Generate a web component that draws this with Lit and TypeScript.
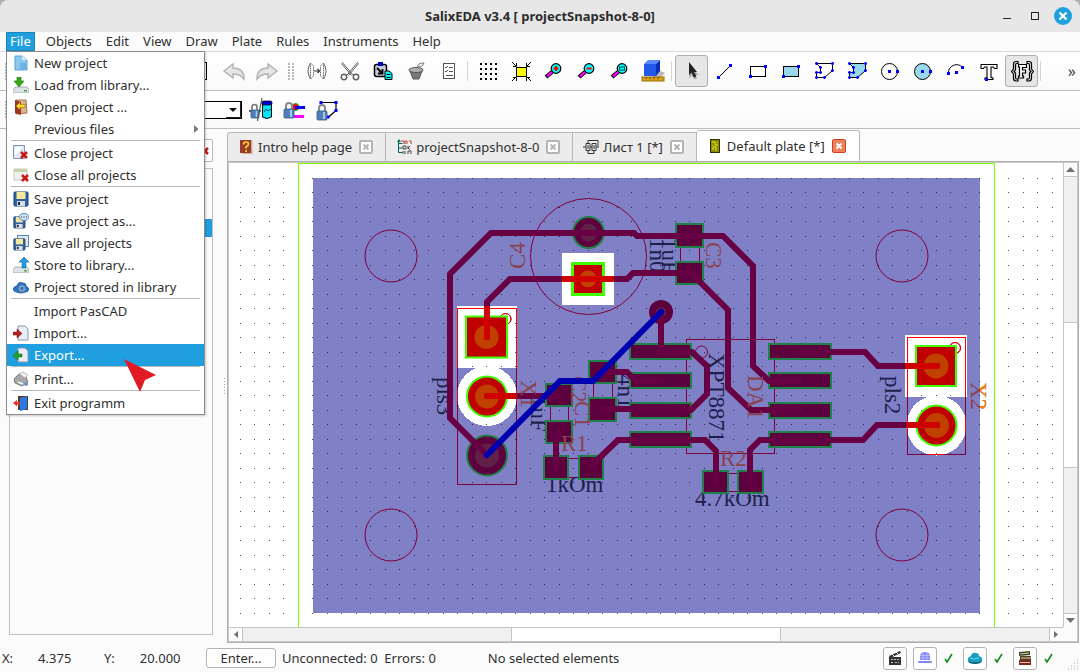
import { LitElement, html, svg, css, nothing } from "lit";
import { customElement } from "lit/decorators.js";
import { classMap } from "lit/directives/class-map.js";

const blueDot = (x: number, y: number) =>
  svg`<rect x=${x - 1.5} y=${y - 1.5} width="3" height="3" fill="#0000ff"/>`;

const redX = (x: number, y: number) =>
  svg`<path d="M${x} ${y}l6 6M${x + 6} ${y}l-6 6" stroke="#c81818" stroke-width="2.6"/>`;

const padlock = (x: number, y: number) => svg`
  <path d="M${x + 2} ${y + 8}V${y + 4}a3 3 0 0 1 6 0v4" fill="none" stroke="#8a8a8a" stroke-width="2"/>
  <rect x=${x} y=${y + 7} width="10" height="9" rx="1" fill="#4f7fb8" stroke="#335a8c" stroke-width=".8"/>
  <path d="M${x + 7} ${y + 8}v7" stroke="#a8c8ec" stroke-width="2"/>`;

const magnifier = (mark: unknown) => svg`
  <path d="M4 18l6-5" stroke="#000" stroke-width="4.2"/><path d="M5 17.400l5-4.200" stroke="#ff00ff" stroke-width="2.400"/>
  <circle cx="14" cy="9.500" r="4.800" fill="#00ffff" stroke="#000" stroke-width="1.200"/>${mark}`;

const polyline = (fill: string) => svg`
  <path d="M4.500 4.500h16v7l-8 7h-8v-5h4v-5z" fill=${fill} stroke="#000"/>
  ${[[4.5, 4.5], [20.5, 4.5], [20.5, 11.5], [12.5, 18.5], [4.5, 18.5], [4.5, 13.5], [8.5, 13.5], [8.5, 8.5]].map(([x, y]) =>
    svg`<path d="M${x - 1.5} ${y}h3M${x} ${y - 1.5}v3" stroke="#0000ff" stroke-width="1.500"/>`)}`;

const icons: Record<string, unknown> = {
  undo: svg`<path d="M2 12l9-7v4c7 0 11 3 11 11-3-4-6-5-11-5v4z" fill="#e6e6e6" stroke="#b4b4b4" stroke-width="1.500"/>`,
  redo: svg`<path d="M22 12l-9-7v4C6 9 2 12 2 20c3-4 6-5 11-5v4z" fill="#e6e6e6" stroke="#b4b4b4" stroke-width="1.500"/>`,
  mirror: svg`<g fill="none" stroke="#666"><path d="M5.500 4Q3 8 3 12t2.500 8M18.500 4Q21 8 21 12t-2.500 8"/><path d="M5.500 4v16l3-3V7zM18.500 4v16l-3-3V7z" stroke-dasharray="1.500 .8"/></g><path d="M9 12h5M12.500 10L14.500 12l-2 2" fill="none" stroke="#333" stroke-width="1.200"/>`,
  cut: svg`<g fill="none" stroke="#606060"><path d="M4 3l11 13M20 3L9 16M3.500 4.500l10 12M20.500 4.500l-10 12" stroke-width="1"/><circle cx="6" cy="18" r="2.700" stroke-width="1.500"/><circle cx="18" cy="18" r="2.700" stroke-width="1.500"/></g>`,
  paste: svg`<rect x="3.500" y="5.500" width="12" height="12" rx="2" fill="#c8c8d8" stroke="#000" stroke-width="1.500"/><path d="M7 3h5v4H7z" fill="#0000b0"/><path d="M6 9l5 5M11.500 10v4.500H7" fill="none" stroke="#000" stroke-width="1.800"/><path d="M14 12h4l3 2.500v6h-7z" fill="#00ffff" stroke="#000"/><path d="M15.500 15.500h4M15.500 18.500h4" stroke="#000"/>`,
  trash: svg`<path d="M6 12h12l-3 8H9z" fill="#7a7a7a" stroke="#555"/><ellipse cx="12" cy="11" rx="7" ry="2.500" fill="#b0b0b0" stroke="#555"/><path d="M14 8c-1-3 2-4 6-4-1 3-3 4-6 4z" fill="#eee" stroke="#777"/>`,
  form: svg`<rect x="6.500" y="4.500" width="11" height="15" fill="#fff" stroke="#555"/><path d="M8 8l1 1 2-2M8 12l1 1 2-2M12 8.500h4M12 12.500h4M9 16.500h7" fill="none" stroke="#555"/>`,
  grid: svg`<g fill="#000">${[4, 9, 14, 19].flatMap((x) => [4, 9, 14, 19].map((y) => svg`<rect x=${x} y=${y} width="2" height="2"/>`))}</g>`,
  fit: svg`<rect x="7.500" y="8.500" width="10" height="9" fill="#ffff00" stroke="#000"/><path d="M3 3l4 4M22 3l-4 4M3 22l4-4M22 22l-4-4M4 7.500h3.500V4M21 7.500h-3.500V4M4 18.500h3.500V22M21 18.500h-3.500V22" fill="none" stroke="#000"/>`,
  zoomIn: magnifier(svg`<path d="M11.500 9.500h5M14 7v5" stroke="#ff0000" stroke-width="2"/>`),
  zoomOut: magnifier(svg`<path d="M11.500 9.500h5" stroke="#ff0000" stroke-width="2"/>`),
  zoomFit: magnifier(svg`<rect x="11.500" y="8" width="5" height="3" fill="none" stroke="#004040"/>`),
  cube: svg`<path d="M15 10l9 4-4 4h-8z" fill="#b8b8b8"/><path d="M3 5l12 0v12H3z" fill="#2458e8"/><path d="M3 5l4-4h12l-4 4z" fill="#5a88ff"/><path d="M15 5l4-4v11l-4 5z" fill="#0a30b8"/><rect x="1" y="18" width="22" height="4" fill="#d8a018" stroke="#9a6c08"/><path d="M5 18v2M9 18v2M13 18v2M17 18v2" stroke="#7a5000"/>`,
  cursor: svg`<path d="M10 8l9 8-4 0 2 4-3 0-2-3-3 2z" fill="#aaa"/><path d="M9 3v13l2.500-2.500 2.500 5 2.500-1-2.500-4.500h3z" fill="#222"/>`,
  line: svg`<path d="M6 18L18 6" stroke="#000"/>${blueDot(5.5, 18.5)}${blueDot(17.5, 6.5)}`,
  rect: svg`<rect x="4.500" y="7.500" width="15" height="10" fill="#fff" stroke="#000"/>${blueDot(4.5, 17.5)}${blueDot(19.5, 7.5)}`,
  rectFill: svg`<rect x="4.500" y="7.500" width="15" height="10" fill="#98d8ec" stroke="#000"/>${blueDot(4.5, 17.5)}${blueDot(19.5, 7.5)}`,
  poly: polyline("#fff"),
  polyFill: polyline("#98d8ec"),
  circle: svg`<circle cx="11.500" cy="12.500" r="8" fill="#fff" stroke="#000"/>${blueDot(11.5, 12.5)}${blueDot(19.5, 12.5)}`,
  circleFill: svg`<circle cx="11.500" cy="12.500" r="8" fill="#98d8ec" stroke="#000"/>${blueDot(11.5, 12.5)}${blueDot(19.5, 12.5)}`,
  arc: svg`<path d="M4.500 14a8 8 0 0 1 14-5.500" fill="none" stroke="#000"/>${blueDot(4.5, 14.5)}${blueDot(12.5, 13.5)}${blueDot(18.5, 8.5)}`,
  text: svg`<path d="M4 5.500h16v4h-2.500l-1-1.500H14v10.500l2 .5v1.500H8V19l2-.5V8H7.500l-1 1.500H4z" fill="#fff" stroke="#000" stroke-width="1.100"/>${blueDot(9.5, 20.5)}`,
  formula: svg`<g fill="none" stroke="#000" stroke-width="1.200"><path d="M8 2.500H6Q3.500 2.500 3.500 5v5L1.500 12.500 3.500 15v4q0 3 2.500 3h2v-2H6.500Q5.500 20 5.500 18v-4L4 12.500 5.500 11V6q0-1.500 1-1.500H8zM17 2.500h2q2.500 0 2.500 2.500v5l2 2.500-2 2.500v4q0 3-2.500 3h-2v-2h1.500q1 0 1-2v-4l1.500-1.500L19.500 11V6q0-1.500-1-1.500H17z"/><path d="M8.500 5.500h8v3h-4v2.500h3v3h-3v3h1v2h-5v-2h1v-9h-1z" fill="#fff"/></g>`,
  lockLib: svg`<path d="M0 13h12" stroke="#222" stroke-width="1.500"/><path d="M3 12V9a2.500 2.500 0 0 1 5 0v3" fill="none" stroke="#777" stroke-width="1.600"/><rect x="2" y="12" width="8" height="8" rx="1" fill="#4f7fb8" stroke="#335a8c" stroke-width=".8"/><path d="M7.500 13v6" stroke="#a8c8ec" stroke-width="1.600"/><path d="M13 0L8.500 23" stroke="#506040" stroke-width="1.200"/><path d="M13.500 5v14q4 3 9 0V5" fill="#00e8f8" stroke="#000"/><rect x="13" y="3" width="10" height="4" rx="1.500" fill="#0000d0" stroke="#000" stroke-width=".7"/><path d="M15 14l2-3 2 2 3-2" stroke="#005060" fill="none"/>`,
  lockLayer: svg`<circle cx="13.500" cy="9" r="3.500" fill="#ff0000" stroke="#00c000"/><path d="M13 9.500h10" stroke="#0000ff" stroke-width="3"/><path d="M12 18.500h10" stroke="#ff00ff" stroke-width="3"/>${padlock(2, 4)}`,
  lockShape: svg`<path d="M6 4.500h15v8l-8 7" fill="none" stroke="#000" stroke-width="1.200"/>${blueDot(6, 4.5)}${blueDot(21, 4.5)}${blueDot(21, 12.5)}${blueDot(13, 19)}${padlock(2, 6)}`,
};

const page = svg`<path d="M3 1h7l3 3v11H3z" fill="#e8eef6" stroke="#8898b0"/>`;
const floppy = (x: number, y: number, s: number) => svg`<g transform="translate(${x} ${y}) scale(${s})">
  <rect x="1" y="1" width="14" height="14" rx="1" fill="#2f62a0" stroke="#1b3d70"/><rect x="3.500" y="1" width="9" height="7" fill="#f4e7a0"/>
  <rect x="4" y="10" width="8" height="5" fill="#d8dde4"/><rect x="5" y="11" width="2" height="3" fill="#223"/></g>`;
const tray = svg`<path d="M2 10h12l2 3v3H0v-3z" fill="#dfe3e8" stroke="#9aa2ac" stroke-width=".8"/><rect x="11" y="13" width="3" height="1.500" fill="#40b020"/>`;

const menuIcons: Record<string, unknown> = {
  new: svg`<path d="M2 1h7l5 4v10H2z" fill="#8cc8ee" stroke="#5aa0d0"/><path d="M9 1v4h5z" fill="#d8eefc"/><path d="M7 8h6v6H7z" fill="#6ab4e4"/>`,
  load: svg`${tray}<path d="M4 0h4v4h3l-5 6-5-6h3z" fill="#38a818" stroke="#207008" stroke-width=".6"/>`,
  open: svg`<path d="M3 1l10 0 1 13-11 1z" fill="#d8b48c" stroke="#a07850"/><path d="M2 1l6 2v13l-6-2z" fill="#a03428"/><path d="M12 5.500H7V3L3 7l4 4V8.500h5z" fill="#ffe020" stroke="#806000" stroke-width=".5"/>`,
  close: svg`<path d="M.5 .5h11v13H.5z" fill="#dfe8f4" stroke="#8098b8"/><path d="M2 2h7l-7 9z" fill="#fff"/>${redX(8, 7)}`,
  closeAll: svg`<rect x="1" y="2" width="13" height="11" fill="#f0f0ec" stroke="#c8c8c0"/><rect x="1" y="2" width="13" height="3" fill="#c4d4a8"/>${redX(9, 8)}`,
  save: floppy(0, 0, 1),
  saveAs: svg`${floppy(0, 3, 0.8)}<ellipse cx="11" cy="4" rx="5" ry="3.500" fill="#cfe2f4" stroke="#5888b8"/><path d="M8 4h1M10.500 4h1M13 4h1" stroke="#224"/>`,
  saveAll: svg`<rect x="4.500" y=".5" width="11" height="11" fill="#dfe8f2" stroke="#5888b8"/>${floppy(0, 3, 0.8)}`,
  store: svg`${tray}<path d="M9 11h4V5h3l-5-5-5 5h3z" fill="#2898e0" stroke="#1068a8" stroke-width=".6"/>`,
  stored: svg`<path d="M1 12q-2-4 3-5 1-5 6-3 3 0 3 3 4 2 2 5-7 4-14 0z" fill="#2f74c4" stroke="#1c4c8c" stroke-width=".8"/><circle cx="9" cy="9.500" r="2.500" fill="none" stroke="#8aa4c4" stroke-width="1.500"/>`,
  import: svg`<g transform="translate(2 0)">${page}</g><path d="M0 7h4V4l5 4.500L4 13v-3H0z" fill="#b82020" stroke="#701010" stroke-width=".5"/>`,
  export: svg`<g transform="translate(2 0)">${page}</g><path d="M9 7H5V4L0 8.500 5 13v-3h4z" fill="#28a028" stroke="#0c600c" stroke-width=".5"/>`,
  print: svg`<path d="M1 8l5-5 7 3 2 5-6 4-7-3z" fill="#a8a8a8" stroke="#666" stroke-width=".8"/><path d="M6 3l4-2 5 3-3 3z" fill="#eee" stroke="#999" stroke-width=".6"/><path d="M5 11l5 2" stroke="#fff" stroke-width="1.500"/><circle cx="13" cy="13" r="2" fill="#6898c8"/>`,
  exit: svg`<path d="M5 1h10v14H5z" fill="#603818"/><path d="M7 3l7-2v13l-7 2z" fill="#2878e8"/><path d="M0 8l4-3v2h3v2.500H4v2z" fill="#e83028"/>`,
};

const tabIcons: Record<string, unknown> = {
  help: svg`<path d="M2 1h11v13H2z" fill="#983c30"/><path d="M13 1h1.500v14H4v-1h9z" fill="#d8b090"/><path d="M5.500 5.500q0-2.500 2.500-2.500t2.500 2q0 1.500-2.500 3v1.500M8 11v2" fill="none" stroke="#ffd820" stroke-width="1.600"/>`,
  tree: svg`<path d="M2.500 1v12.500h4M2.500 4.500h4M2.500 9h4" fill="none" stroke="#006060"/><path d="M1 3l2-3 2 3z" fill="#008040"/><path d="M5 2h3v3M9 5V2h2v3M13 2h2v3" fill="none" stroke="#c04040"/><path d="M7 7h3v3H7zM12 7v3M14 7l-2 2 2 1.500M7 12v3M9 12v3M12 15v-3h3v3" fill="none" stroke="#444"/>`,
  sheet: svg`<path d="M0 8h3M3 4.500h4v7H3zM7 8h2M9 4.500h4v7H9zM13 8h3M5 4V1.500h10V7M5 12v2.500h6V12M5 6v4M11 6v4" fill="none" stroke="#333"/>`,
  board: svg`<rect x="3.500" y="1.500" width="9" height="13" fill="#8a8a00" stroke="#303000"/><path d="M5 4h3v3h3M6 12V9h3v4M10 4v1M5 7.500h1" fill="none" stroke="#e8e820"/>`,
};

const menuRows: ([string, string?] | null)[] = [
  ["New project", "new"], ["Load from library...", "load"], ["Open project ...", "open"], ["Previous files"], null,
  ["Close project", "close"], ["Close all projects", "closeAll"], null,
  ["Save project", "save"], ["Save project as...", "saveAs"], ["Save all projects", "saveAll"],
  ["Store to library...", "store"], ["Project stored in library", "stored"], null,
  ["Import PasCAD"], ["Import...", "import"], ["Export...", "export"], null,
  ["Print...", "print"], null, ["Exit programm", "exit"],
];

const tools: (string | [string, string])[] = [
  ["undo", "Undo"], ["redo", "Redo"], "grip", ["mirror", "Mirror"], ["cut", "Cut"], ["paste", "Paste"],
  ["trash", "Delete"], ["form", "Properties"], "sep", ["grid", "Grid"], ["fit", "Fit"], ["zoomIn", "Zoom in"],
  ["zoomOut", "Zoom out"], ["zoomFit", "Zoom window"], ["cube", "3D view"], "sep", ["cursor", "Select"],
  ["line", "Line"], ["rect", "Rectangle"], ["rectFill", "Filled rectangle"], ["poly", "Polygon"],
  ["polyFill", "Filled polygon"], ["circle", "Circle"], ["circleFill", "Filled circle"], ["arc", "Arc"],
  ["text", "Text"], ["formula", "Fields"], "sep",
];

const holes = [[391, 256], [902, 256], [391, 535], [902, 535]];

const smdPads = [
  [675, 223, 29, 25], [675, 261, 29, 24], [545, 383, 28, 24], [545, 420, 28, 24],
  [588, 360, 29, 24], [588, 397, 29, 25], [543, 455, 26, 25], [578, 455, 26, 25],
  [702, 470, 27, 24], [737, 470, 27, 24],
  ...[343, 372, 402, 431].flatMap((y) => [[629, y, 63, 17], [768, y, 64, 17]]),
];

const tracks = [
  "M690 236H637L634 233H491L450 274V418L487 455",
  "M487 337V302L510 279H627L633 273H691L728 310V388L751 410H800",
  "M690 236H723L753 266V366L769 381H800",
  "M661 312V352H692L707 366V394L691 410H661",
  "M602 372H627L636 381H661", "M602 409H661", "M487 396H559", "M556 466V442L559 432",
  "M591 466L618 440H705L716 451V483", "M750 483V450L760 440H863L877 425H937",
  "M800 352H865L878 366H937",
];

const lightRegions = svg`
  <rect x="562" y="253" width="52" height="52"/>
  <rect x="457" y="306" width="60" height="62"/><circle cx="487" cy="396" r="30"/>
  <rect x="905" y="335" width="62" height="62"/><circle cx="936.500" cy="425.500" r="30"/>`;

const silk = () => svg`
  <rect x="457.500" y="308.500" width="59" height="176"/>
  <rect x="907.500" y="337.500" width="58" height="117"/>
  <circle cx="505.500" cy="319" r="5.500"/><circle cx="955" cy="348" r="5.500"/>`;

const boardText: [string, number, number, number, boolean][] = [
  ["C4", 525, 269, -90, true], ["C3", 706, 242, 90, true], ["DA1", 748, 375, 90, true],
  ["X1", 521, 380, 90, true], ["C1", 575, 401, 90, true], ["C2", 571, 376, 90, true],
  ["R1", 561, 451, 0, true], ["R2", 720, 466, 0, true], ["X2", 971, 382, 90, true],
  ["1n0", 650, 238, 90, false], ["1uF", 662, 238, 90, false], ["1uF", 531, 396, 90, false],
  ["4n1", 618, 374, 90, false], ["XPT8871", 709, 353, 90, false], ["pls2", 885, 376, 90, false],
  ["pls3", 437, 377, 90, false], ["1kOm", 546, 492, 0, false], ["4.7kOm", 695, 506, 0, false],
];

const gridDots = () => {
  let d = "";
  for (let j = 0; j < 60; j++)
    for (let i = 0; i < 130; i++) d += `M${Math.floor(240.4 + i * 14.5)} ${Math.floor(178 + j * 14.5)}h1v1h-1z`;
  return d;
};

@customElement("board-view")
class BoardView extends LitElement {
  static styles = css`
    :host { display: block; overflow: hidden; background: #fff; min-width: 0; min-height: 0; }
    svg { display: block; width: 100%; height: 100%; }
    text { font: 23px "Liberation Serif", serif; }
    .ref { fill: #8a4250; }
    .ref-out { fill: #ff8000; }
    .val { fill: #1e1e4c; }
    .crisp { shape-rendering: crispEdges; }
  `;

  private labels(ref: boolean, cls: string) {
    return boardText.filter((t) => t[4] === ref).map(([t, x, y, a]) =>
      svg`<text class=${cls} transform="translate(${x} ${y}) rotate(${a})">${t}</text>`);
  }

  private throughPad(x: number, y: number, r: number, inner: number, on: boolean) {
    return svg`<circle cx=${x} cy=${y} r=${r} fill=${on ? "#c00000" : "#5c003e"} stroke=${on ? "#40ff00" : "#20804a"} stroke-width="2"/>
      <circle cx=${x} cy=${y} r=${inner} fill=${on ? "#c04000" : "#602048"}/>`;
  }

  private squarePad(x: number, y: number, half: number, inner: number, edge: number) {
    return svg`<rect x=${x - half} y=${y - half} width=${half * 2} height=${half * 2} fill="#c00000" stroke="#40ff00" stroke-width=${edge}/>
      <circle cx=${x} cy=${y} r=${inner} fill="#c04000"/>`;
  }

  render() {
    return html`<svg role="img" aria-label="Default plate">
      <defs>
        <clipPath id="light">${lightRegions}</clipPath>
        <clipPath id="outside"><rect x="980" y="163" width="80" height="480"/></clipPath>
      </defs>
      <g transform="translate(-229 -163)">
        <rect x="313" y="178" width="667" height="435" fill="#8080c6"/>
        <g fill="#fff" class="crisp">${lightRegions}</g>
        <path class="crisp" d=${gridDots()} fill="#000" fill-opacity=".68"/>
        <path class="crisp" d="M298.500 800V163.500H994.500V800" fill="none" stroke="#80ff00"/>
        <g fill="none" stroke="#80003c">
          ${holes.map(([x, y]) => svg`<circle cx=${x} cy=${y} r="26"/>`)}
          <circle cx="588.500" cy="256.500" r="58"/>
          <path d="M680.500 248v13M699.500 248v13M550.500 407v13M568.500 407v13M593.500 384v13M612.500 384v13M569 458.500h9M569 477.500h9M729 473.500h8M729 491.500h8"/>
          <rect x="686.500" y="339.500" width="88" height="114"/>
          <circle cx="701.500" cy="352" r="6"/>
          ${silk()}
        </g>
        <g fill="none" stroke="#ff0000" clip-path="url(#light)">${silk()}</g>
        ${this.labels(false, "val")}
        ${smdPads.map(([x, y, w, h]) => svg`<rect x=${x + 1} y=${y + 1} width=${w - 2} height=${h - 2} fill="#5c003e" stroke="#20804a" stroke-width="2"/>`)}
        ${this.throughPad(588.5, 232.5, 15.5, 9, false)}
        ${this.throughPad(487, 455.5, 20, 12, false)}
        <circle cx="661" cy="312" r="12" fill="#5c003e"/><circle cx="661" cy="312" r="5" fill="#602048"/>
        ${this.squarePad(588, 279, 15.5, 8.5, 3)}
        ${this.squarePad(486.5, 337, 20.5, 12, 2)}
        ${this.squarePad(936, 366, 20, 12.5, 2)}
        ${this.throughPad(487, 396.5, 20, 12, true)}
        ${this.throughPad(936.5, 425.5, 20, 12.5, true)}
        <g fill="none" stroke="#680044" stroke-width="6" stroke-linecap="round">${tracks.map((d) => svg`<path d=${d}/>`)}</g>
        <g fill="none" stroke="#d00000" stroke-width="6" stroke-linecap="round" clip-path="url(#light)">${tracks.map((d) => svg`<path d=${d}/>`)}</g>
        ${this.labels(true, "ref")}
        <g clip-path="url(#outside)">${this.labels(true, "ref-out")}</g>
        <path d="M487 455L560 381H593L661 312" fill="none" stroke="#0000b0" stroke-width="6" stroke-linecap="round"/>
      </g>
    </svg>`;
  }
}

@customElement("app-root")
class AppRoot extends LitElement {
  static styles = css`
    :host { display: flex; flex-direction: column; height: 100vh; position: relative; overflow: hidden; box-sizing: border-box;
      background: #fbfbfb; color: #303030; font: 13px/20px "Noto Sans", "Open Sans", sans-serif; }
    * { box-sizing: border-box; }
    button, input, select { font: inherit; color: inherit; margin: 0; padding: 0; border: 0; background: none; }
    svg { display: block; flex: none; }

    .frame { background: #b0b0b0; }
    .titlebar { height: 32px; display: grid; grid-template-columns: 1fr auto 1fr; align-items: center; background: #e7e7e7; border-radius: 8px 8px 0 0; }
    .titlebar h1 { grid-column: 2; margin: 0; font-size: 13px; font-weight: 700; color: #2c2c2c; }
    .window-buttons { display: flex; justify-content: flex-end; gap: 10px; padding-right: 8px; }
    .window-buttons button { width: 18px; height: 18px; }

    .menubar { display: flex; height: 20px; padding-left: 6px; border-bottom: 1px solid #dadada; }
    .menubar button { padding: 0 7px; line-height: 19px; }
    .menubar .open { padding: 0 4px; margin-right: 4px; background: #209fe0; color: #fff; box-shadow: inset 0 0 0 1px #1c86bc; }

    .toolbar { display: flex; align-items: center; border-bottom: 1px solid #bcbcbc; background: linear-gradient(#fff, #fafafa); flex: none; }
    .main-tools { height: 39px; }
    .lock-tools { height: 38px; }
    .grip { flex: none; width: 7px; height: 17px; margin: 0 5px; background: radial-gradient(circle at 1px 1px, #b8b8b8 1px, transparent 1px) 0 0 / 4px 3px; }
    .scale { width: 190px; height: 18px; margin-right: 10px; border: 1px solid #000; }
    .tool { flex: none; width: 33px; height: 32px; display: grid; place-items: center; }
    .tool.on { border: 1px solid #b0b0b0; border-radius: 3px; background: #e6e6e6; }
    .sep { flex: none; width: 1px; height: 20px; margin: 0 3px 0 2px; background: #d4d4d4; }
    .more { margin-left: auto; padding-right: 4px; font-size: 16px; color: #444; }
    .layer { position: relative; width: 225px; height: 18px; margin-right: 2px; }
    .layer select { width: 100%; height: 100%; appearance: none; border: 1px solid #000; background: #fff; }
    .layer svg { position: absolute; right: 1px; top: 1px; pointer-events: none; }

    .workspace { flex: 1; display: flex; min-height: 0; }
    .sidebar { width: 227px; flex: none; display: flex; }
    .sidebar-main { flex: 1; display: flex; flex-direction: column; align-items: flex-end; gap: 6px; padding: 10px 0 9px 9px; }
    .panel-close { width: 24px; height: 23px; border: 1px solid #b8b8b8; border-radius: 2px; display: grid; place-items: center; background: #fff; }
    .list { align-self: stretch; flex: 1; border: 1px solid #c0c0c0; padding-top: 50px; }
    .list-row { height: 18px; background: #209fe0; }
    .splitter { width: 14px; display: flex; align-items: center; justify-content: flex-end; padding-right: 2px; }
    .splitter i { width: 1px; height: 17px; background: repeating-linear-gradient(#aaa 0 1px, transparent 1px 3px); }

    .main { flex: 1; min-width: 0; display: flex; flex-direction: column; padding: 0 1px 1px 0; }
    .tabs { display: flex; align-items: flex-end; height: 32px; flex: none; }
    .tab { height: 29px; display: flex; align-items: center; gap: 4px; padding: 0 12px 1px 10px; background: #ececec;
      border: 1px solid #b8b8b8; border-left-width: 0; border-bottom: 0; }
    .tab:first-child { border-left-width: 1px; border-top-left-radius: 3px; }
    .tab.active { height: 31px; background: #fff; padding: 0 13px 1px 10px; border-radius: 3px 3px 0 0; }
    .tab-close { width: 14px; height: 14px; margin-left: 3px; border-radius: 2px; background: #fff; border: 2px solid #b4b4b4; display: grid; place-items: center; }
    .tab.active .tab-close { background: #ec8260; border: 1px solid #cf4020; }

    .viewer { flex: 1; min-height: 0; border: 1px solid #b0b0b0; padding: 1px; display: grid; background: #c8c8c8;
      grid-template-columns: minmax(0, 1fr) 14px; grid-template-rows: minmax(0, 1fr) 14px; }
    .bar { display: flex; background: #c4c4c4; gap: 1px; }
    .bar.v { flex-direction: column; padding-left: 1px; }
    .bar.h { padding-top: 1px; }
    .bar > * { flex: 1; background: #f0f0f0; }
    .bar .thumb { background: #fff; }
    .bar button { flex: none; background: #fcfcfc; width: 13px; height: 13px; display: grid; place-items: center; }
    .corner { background: #fbfbfb; }

    .status { height: 28px; flex: none; display: flex; align-items: center; padding-left: 2px; }
    .coord { display: flex; align-items: center; width: 102px; }
    .coord output { flex: 1; padding-left: 25px; }
    .enter { width: 70px; height: 20px; border: 1px solid #b4b4b4; border-radius: 3px; background: #fff; line-height: 18px; margin-right: 6px; }
    .selection { margin-left: 52px; }
    .services { margin-left: auto; display: flex; align-items: center; gap: 6px; }
    .service { width: 24px; height: 23px; border: 1px solid #b4b4b4; border-radius: 3px; background: #fff; display: grid; place-items: center; }
    .ok { width: 14px; height: 14px; margin: 0 2px 0 -2px; }
    .resize { align-self: flex-end; margin-left: 10px; color: #aaa; }

    .menu { position: absolute; left: 6px; top: 51px; width: 199px; padding: 0; border: 1px solid #8c8c8c; background: #fff; box-shadow: 1px 1px 2px rgba(0, 0, 0, .2); display: flex; flex-direction: column; z-index: 2; }
    .item { height: 22px; display: flex; align-items: center; gap: 5px; padding: 0 5px 0 6px; text-align: left; white-space: nowrap; }
    .item .slot { width: 16px; height: 16px; }
    .item .arrow { margin-left: auto; }
    .item.hot { background: #209fe0; color: #fff; }
    .rule { height: 1px; margin: 0 4px 1px; background: #b8b8b8; border: 0; flex: none; }
    .pointer { position: absolute; left: 124px; top: 359px; z-index: 3; }
  `;

  private tab(kind: string, name: string, active = false) {
    return html`<div class=${classMap({ tab: true, active })} role="tab" aria-selected=${active}>
      <svg width="16" height="16" viewBox="0 0 16 16">${tabIcons[kind]}</svg>
      <span>${name}</span>
      <button class="tab-close" aria-label="Close ${name}">
        <svg width="8" height="8"><path d="M1.500 1.500l5 5M6.500 1.500l-5 5" stroke=${active ? "#fff" : "#b4b4b4"} stroke-width="2"/></svg>
      </button></div>`;
  }

  private tool(id: string, label: string, on = false) {
    return html`<button class=${classMap({ tool: true, on })} aria-label=${label}>
      <svg width="24" height="24" viewBox="0 0 24 24">${icons[id]}</svg></button>`;
  }

  private arrow(d: string) {
    return html`<svg width="9" height="9"><path d=${d} fill="#707070"/></svg>`;
  }

  private check() {
    return html`<svg class="ok" viewBox="0 0 14 14"><path d="M4 8l2 3 5-8" fill="none" stroke="#108818" stroke-width="1.500"/></svg>`;
  }

  render() {
    return html`
      <div class="frame"><header class="titlebar">
        <h1>SalixEDA v3.4 [ projectSnapshot-8-0]</h1>
        <div class="window-buttons">
          <button aria-label="Minimize"><svg width="18" height="18"><path d="M5 11.500h8" stroke="#222"/></svg></button>
          <button aria-label="Maximize"><svg width="18" height="18"><rect x="5.500" y="5.500" width="7" height="7" fill="none" stroke="#222"/></svg></button>
          <button aria-label="Close"><svg width="18" height="18"><circle cx="9" cy="9" r="9" fill="#209fe0"/><path d="M5.500 5.500l7 7M12.500 5.500l-7 7" stroke="#fff" stroke-width="2.200"/></svg></button>
        </div>
      </header></div>
      <nav class="menubar">
        ${["File", "Objects", "Edit", "View", "Draw", "Plate", "Rules", "Instruments", "Help"].map((m, i) =>
          html`<button class=${i ? "" : "open"}>${m}</button>`)}
      </nav>
      <div class="toolbar main-tools">
        <i class="grip"></i>
        <input class="scale" aria-label="Scale" readonly />
        ${tools.map((t) => typeof t === "string" ? html`<i class=${t}></i>` : this.tool(t[0], t[1], t[0] === "cursor" || t[0] === "formula"))}
        <button class="more" aria-label="More tools">»</button>
      </div>
      <div class="toolbar lock-tools">
        <i class="grip"></i>
        <div class="layer">
          <select aria-label="Layer"></select>
          <svg width="15" height="16"><path d="M0 15.500h14.500V0" fill="none" stroke="#222"/><path d="M3 6h8l-4 4z" fill="#111"/></svg>
        </div>
        ${this.tool("lockLib", "Lock library")}${this.tool("lockLayer", "Lock layer")}${this.tool("lockShape", "Lock shape")}
      </div>
      <div class="workspace">
        <aside class="sidebar">
          <div class="sidebar-main">
            <button class="panel-close" aria-label="Remove"><svg width="18" height="16">${redX(10, 5)}</svg></button>
            <div class="list"><div class="list-row"></div></div>
          </div>
          <div class="splitter"><i></i></div>
        </aside>
        <main class="main">
          <div class="tabs" role="tablist">
            ${this.tab("help", "Intro help page")}${this.tab("tree", "projectSnapshot-8-0")}
            ${this.tab("sheet", "Лист 1 [*]")}${this.tab("board", "Default plate [*]", true)}
          </div>
          <div class="viewer">
            <board-view></board-view>
            <div class="bar v">
              <button aria-label="Scroll up">${this.arrow("M0 7h9L4.500 2z")}</button><i></i><i class="thumb"></i><i></i>
              <button aria-label="Scroll down">${this.arrow("M0 2h9L4.500 7z")}</button>
            </div>
            <div class="bar h">
              <button aria-label="Scroll left">${this.arrow("M7 1v7L3 4.500z")}</button><i></i><i class="thumb"></i><i></i>
              <button aria-label="Scroll right">${this.arrow("M2 1v7l4-3.500z")}</button>
            </div>
            <div class="corner"></div>
          </div>
        </main>
      </div>
      <footer class="status">
        <div class="coord">X:<output>4.375</output></div>
        <div class="coord">Y:<output>20.000</output></div>
        <button class="enter">Enter...</button>
        <span>Unconnected: 0&nbsp; Errors: 0</span>
        <span class="selection">No selected elements</span>
        <div class="services">
          <button class="service" aria-label="Video"><svg width="16" height="16"><path d="M2 6l11-5 1 2L3 8z" fill="#333"/><path d="M5 4l2 2M9 2l2 2" stroke="#fff"/><rect x="2" y="7" width="12" height="8" fill="#333"/><path d="M4 9.500h8M4 12.500h2M8 12.500h4" stroke="#bbb" stroke-dasharray="2 1"/></svg></button>
          <button class="service" aria-label="Server"><svg width="16" height="16"><path d="M3 10V7q0-5 5-5t5 5v3z" fill="#8088f8"/><path d="M3 5.500h10M3 8h10M6 2v8M10 2v8" stroke="#c8ccff" stroke-width=".7"/><rect x="1" y="11" width="14" height="2" rx="1" fill="#8088f8"/></svg></button>
          ${this.check()}
          <button class="service" aria-label="Cloud"><svg width="16" height="16"><path d="M1 11q-1-4 3-5 1-4 5-3 3 0 3 3 4 1 3 5-1 2-7 2t-7-2z" fill="#18a0c0"/><path d="M3 8q4 2 9 0" stroke="#70d8e8" fill="none"/><path d="M1 11q7 3 14 0-1 3-7 3t-7-3z" fill="#085878"/></svg></button>
          ${this.check()}
          <button class="service" aria-label="Library"><svg width="16" height="16"><path d="M2 2l11-1v4L2 6z" fill="#3c4830"/><path d="M3 6h11v4H3z" fill="#504028"/><path d="M4 8h10" stroke="#e0d0a0"/><path d="M2 10h12v5H2z" fill="#802820"/><path d="M3 12.500h10" stroke="#e0c0a0"/><path d="M3 4l9-1" stroke="#d0c890"/></svg></button>
          ${this.check()}
        </div>
        <svg class="resize" width="13" height="13"><path d="M10 1h1M7 4h1M10 4h1M4 7h1M7 7h1M10 7h1M1 10h1M4 10h1M7 10h1M10 10h1" stroke="currentColor"/></svg>
      </footer>
      <div class="menu" role="menu">
        ${menuRows.map((r) => r === null ? html`<hr class="rule" />` : html`
          <button class=${classMap({ item: true, hot: r[0] === "Export..." })} role="menuitem">
            ${r[1] ? html`<svg width="16" height="16" viewBox="0 0 16 16">${menuIcons[r[1]]}</svg>` : html`<span class="slot"></span>`}
            ${r[0]}
            ${r[0] === "Previous files" ? html`<svg class="arrow" width="5" height="8"><path d="M0 0v8l4.500-4z" fill="#777"/></svg>` : nothing}
          </button>`)}
      </div>
      <svg class="pointer" width="33" height="33"><path d="M0 0l32 16-11 5-5 12z" fill="#e01b24"/></svg>
    `;
  }
}
